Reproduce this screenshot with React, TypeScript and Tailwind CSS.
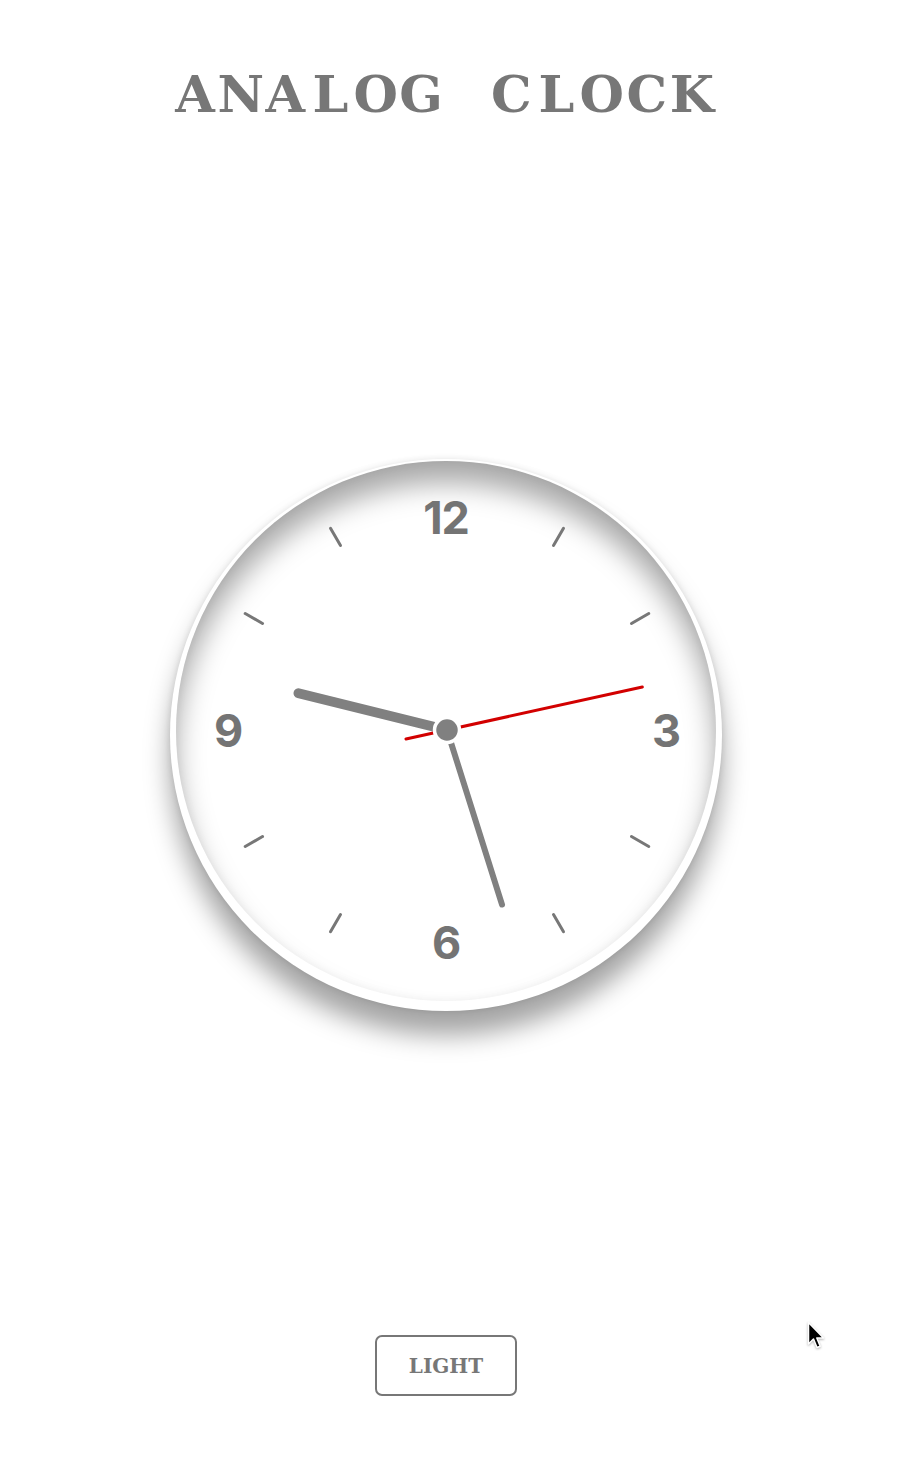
const TICKS = [30, 60, 120, 150, 210, 240, 300, 330];

// fixed time so the picture stays the same: 9:27:13
const HOUR_DEG = 283.9;
const MIN_DEG = 162.5;
const SEC_DEG = 77.6;

const CX = 271;
const CY = 269;

const serif = { fontFamily: "'DejaVu Serif', 'Liberation Serif', serif" };

function pt(deg: number, r: number) {
  const a = (deg * Math.PI) / 180;
  return { x: CX + Math.sin(a) * r, y: CY - Math.cos(a) * r };
}

function Hand({ deg, from, to, width, color }: { deg: number; from: number; to: number; width: number; color: string }) {
  const a = pt(deg, from);
  const b = pt(deg, to);
  return <line x1={a.x} y1={a.y} x2={b.x} y2={b.y} stroke={color} strokeWidth={width} strokeLinecap="round" />;
}

function Dial() {
  const nums = [
    { t: "12", x: 270, y: 56 },
    { t: "3", x: 490, y: 269 },
    { t: "6", x: 270, y: 481 },
    { t: "9", x: 52, y: 269 },
  ];
  return (
    <svg width="540" height="540" viewBox="0 0 540 540" className="absolute inset-0">
      {TICKS.map((d) => {
        const a = pt(d, 213);
        const b = pt(d, 233);
        return <line key={d} x1={a.x} y1={a.y} x2={b.x} y2={b.y} stroke="#777" strokeWidth="3" strokeLinecap="round" />;
      })}
      {nums.map((n) => (
        <text
          key={n.t}
          x={n.x}
          y={n.y}
          textAnchor="middle"
          dominantBaseline="central"
          fill="#747474"
          style={{ fontFamily: "Inter, 'Open Sans', sans-serif", fontWeight: 700, fontSize: 45, letterSpacing: -1 }}
        >
          {n.t}
        </text>
      ))}
      <Hand deg={HOUR_DEG} from={0} to={153} width={10} color="#808080" />
      <Hand deg={MIN_DEG} from={0} to={183} width={6} color="#808080" />
      <Hand deg={SEC_DEG} from={-42} to={200} width={3} color="#d20000" />
      <circle cx={CX} cy={CY} r={12.5} fill="#808080" stroke="#fff" strokeWidth="3.5" />
    </svg>
  );
}

function Cursor() {
  return (
    <svg width="20" height="30" viewBox="0 0 20 30" className="absolute left-[807px] top-[1321px] drop-shadow-[0_1px_1px_rgba(0,0,0,0.3)]">
      <path d="M1.5 1.5 L1.5 23 L6.5 18 L10 26.5 L13.2 25.2 L9.8 17 L16.5 17 Z" fill="#000" stroke="#fff" strokeWidth="1.5" strokeLinejoin="round" />
    </svg>
  );
}

export default function App() {
  const title = "ANALOG CLOCK".split("");
  return (
    <div className="relative min-h-[1460px] w-full bg-white flex flex-col items-center">
      <h1 className="mt-[69px] -ml-[13px] flex text-[51px] leading-none font-bold text-[#777]" style={serif}>
        {title.map((c, i) => (
          <span key={i} className="w-[45.2px] text-center">
            {c === " " ? "\u00a0" : c}
          </span>
        ))}
      </h1>

      <div className="relative mt-[339px] -ml-[8px] w-[552px] h-[552px] rounded-full bg-white shadow-[0_24px_26px_rgba(0,0,0,0.36),0_0_6px_rgba(0,0,0,0.1)]">
        <div className="absolute top-[2px] left-[6px] w-[540px] h-[540px] rounded-full bg-white shadow-[inset_0_22px_28px_rgba(0,0,0,0.34),inset_0_0_10px_rgba(0,0,0,0.05)]">
          <Dial />
        </div>
      </div>

      <button
        className="mt-[324px] -ml-[8px] w-[142px] h-[61px] border-2 border-[#777] rounded-[7px] bg-white text-[20px] font-bold text-[#777] leading-none"
        style={serif}
      >
        LIGHT
      </button>

      <Cursor />
    </div>
  );
}
